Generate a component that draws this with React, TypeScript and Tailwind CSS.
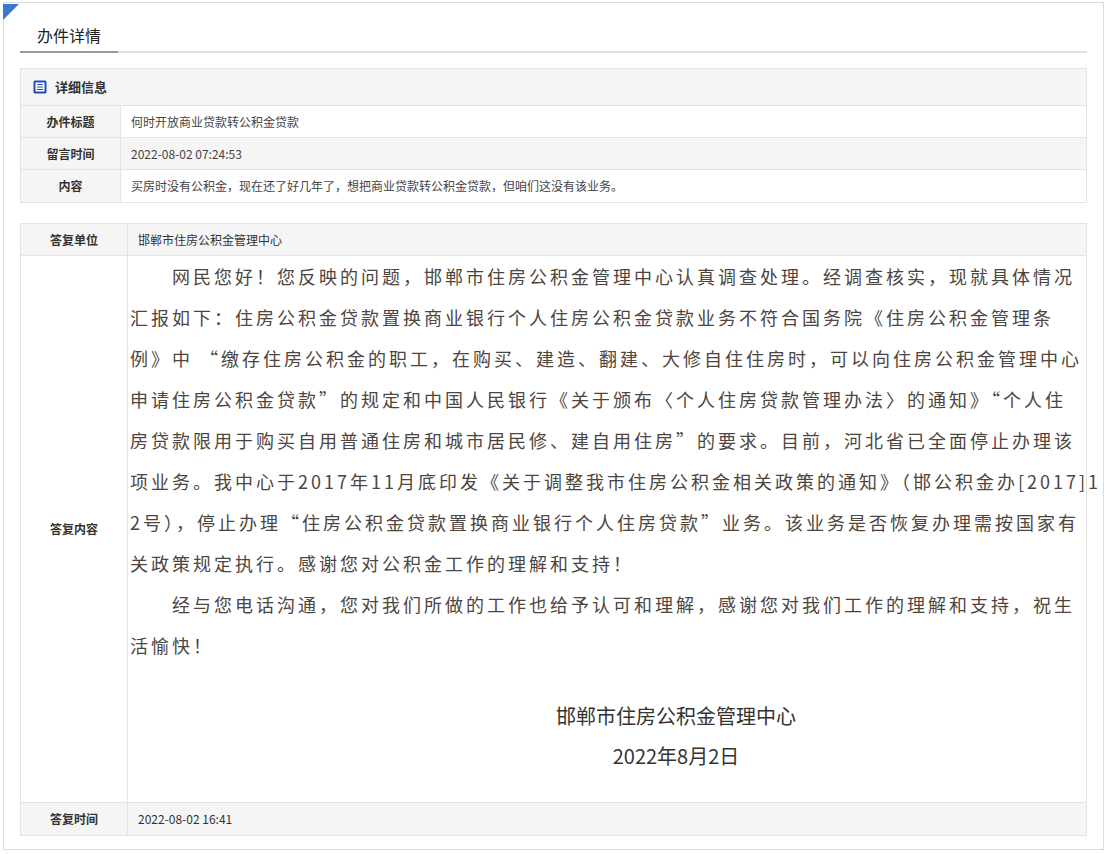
export default function App() {
  const font = { fontFamily: '"Noto Sans CJK SC", "Noto Sans", sans-serif' };
  const lines1 = [
    "网民您好！您反映的问题，邯郸市住房公积金管理中心认真调查处理。经调查核实，现就具体情况",
    "汇报如下：住房公积金贷款置换商业银行个人住房公积金贷款业务不符合国务院《住房公积金管理条",
    "例》中 “缴存住房公积金的职工，在购买、建造、翻建、大修自住住房时，可以向住房公积金管理中心",
    "申请住房公积金贷款”的规定和中国人民银行《关于颁布〈个人住房贷款管理办法〉的通知》“个人住",
    "房贷款限用于购买自用普通住房和城市居民修、建自用住房”的要求。目前，河北省已全面停止办理该",
    "项业务。我中心于2017年11月底印发《关于调整我市住房公积金相关政策的通知》（邯公积金办[2017]1",
    "2号），停止办理“住房公积金贷款置换商业银行个人住房贷款”业务。该业务是否恢复办理需按国家有",
    "关政策规定执行。感谢您对公积金工作的理解和支持！",
    "经与您电话沟通，您对我们所做的工作也给予认可和理解，感谢您对我们工作的理解和支持，祝生",
    "活愉快！",
  ];
  return (
    <div className="w-[1108px] h-[854px] bg-white relative text-[#333]" style={font}>
      <div className="absolute left-[3px] top-[2px] w-0 h-0 border-t-[16px] border-t-[#3a78d4] border-r-[16px] border-r-transparent" />
      <div className="ml-[3px] mt-[2px] mr-[4px] h-[848px] border border-[#dcdcdc] px-[16px] pt-[20px]">
        <div className="border-b-2 border-[#e0e0e0] flex">
          <div className="w-[98px] text-center text-[16px] leading-[24px] pb-[4px] -mb-[2px] border-b-2 border-[#9a9a9a] text-[#222]">办件详情</div>
        </div>
        <div className="mt-[15px] border border-[#e4e4e4] text-[12px]">
          <div className="h-[37px] bg-[#f5f5f5] flex items-center px-[12px] gap-[8px] border-b border-[#e4e4e4]">
            <svg width="14" height="14" viewBox="0 0 14 14">
              <rect x="0.5" y="0.5" width="13" height="13" rx="1.5" fill="#1e4fb0" />
              <rect x="2.5" y="2.5" width="9" height="9" fill="#fff" />
              <rect x="4" y="4" width="6" height="1" fill="#1e4fb0" />
              <rect x="4" y="6.5" width="6" height="1" fill="#1e4fb0" />
              <rect x="4" y="9" width="6" height="1" fill="#1e4fb0" />
            </svg>
            <span className="font-bold text-[13px]">详细信息</span>
          </div>
          {[
            ["办件标题", "何时开放商业贷款转公积金贷款", false],
            ["留言时间", "2022-08-02 07:24:53", true],
            ["内容", "买房时没有公积金，现在还了好几年了，想把商业贷款转公积金贷款，但咱们这没有该业务。", false],
          ].map(([k, v, g], i) => (
            <div key={i} className={`flex h-[32px] ${i < 2 ? "border-b border-[#e4e4e4]" : ""} ${g ? "bg-[#f5f5f5]" : ""}`}>
              <div className="w-[100px] shrink-0 bg-[#f5f5f5] border-r border-[#e4e4e4] flex items-center justify-center font-bold">{k}</div>
              <div className="flex-1 flex items-center px-[10px] text-[#444]">{v}</div>
            </div>
          ))}
        </div>
        <div className="mt-[20px] border border-[#e4e4e4] text-[12px]">
          <div className="flex h-[32px] bg-[#f5f5f5] border-b border-[#e4e4e4]">
            <div className="w-[107px] shrink-0 border-r border-[#e4e4e4] flex items-center justify-center font-bold">答复单位</div>
            <div className="flex-1 flex items-center px-[10px]">邯郸市住房公积金管理中心</div>
          </div>
          <div className="flex h-[547px] border-b border-[#e4e4e4]">
            <div className="w-[107px] shrink-0 border-r border-[#e4e4e4] flex items-center justify-center font-bold">答复内容</div>
            <div className="flex-1 min-w-0 pl-[2px] pt-[-2px] text-[18px] leading-[41px] tracking-[3px] text-[#4d4540]">
              {lines1.map((l, i) => (
                <div key={i} className={`whitespace-nowrap ${i === 0 || i === 8 ? "pl-[42px]" : ""}`}>{l}</div>
              ))}
              <div className="mt-[30px] pl-[136px] text-center text-[20px] leading-[40px] tracking-normal text-[#333]">
                <div>邯郸市住房公积金管理中心</div>
                <div>2022年8月2日</div>
              </div>
            </div>
          </div>
          <div className="flex h-[32px] bg-[#f5f5f5]">
            <div className="w-[107px] shrink-0 border-r border-[#e4e4e4] flex items-center justify-center font-bold">答复时间</div>
            <div className="flex-1 flex items-center px-[10px]">2022-08-02 16:41</div>
          </div>
        </div>
      </div>
    </div>
  );
}
